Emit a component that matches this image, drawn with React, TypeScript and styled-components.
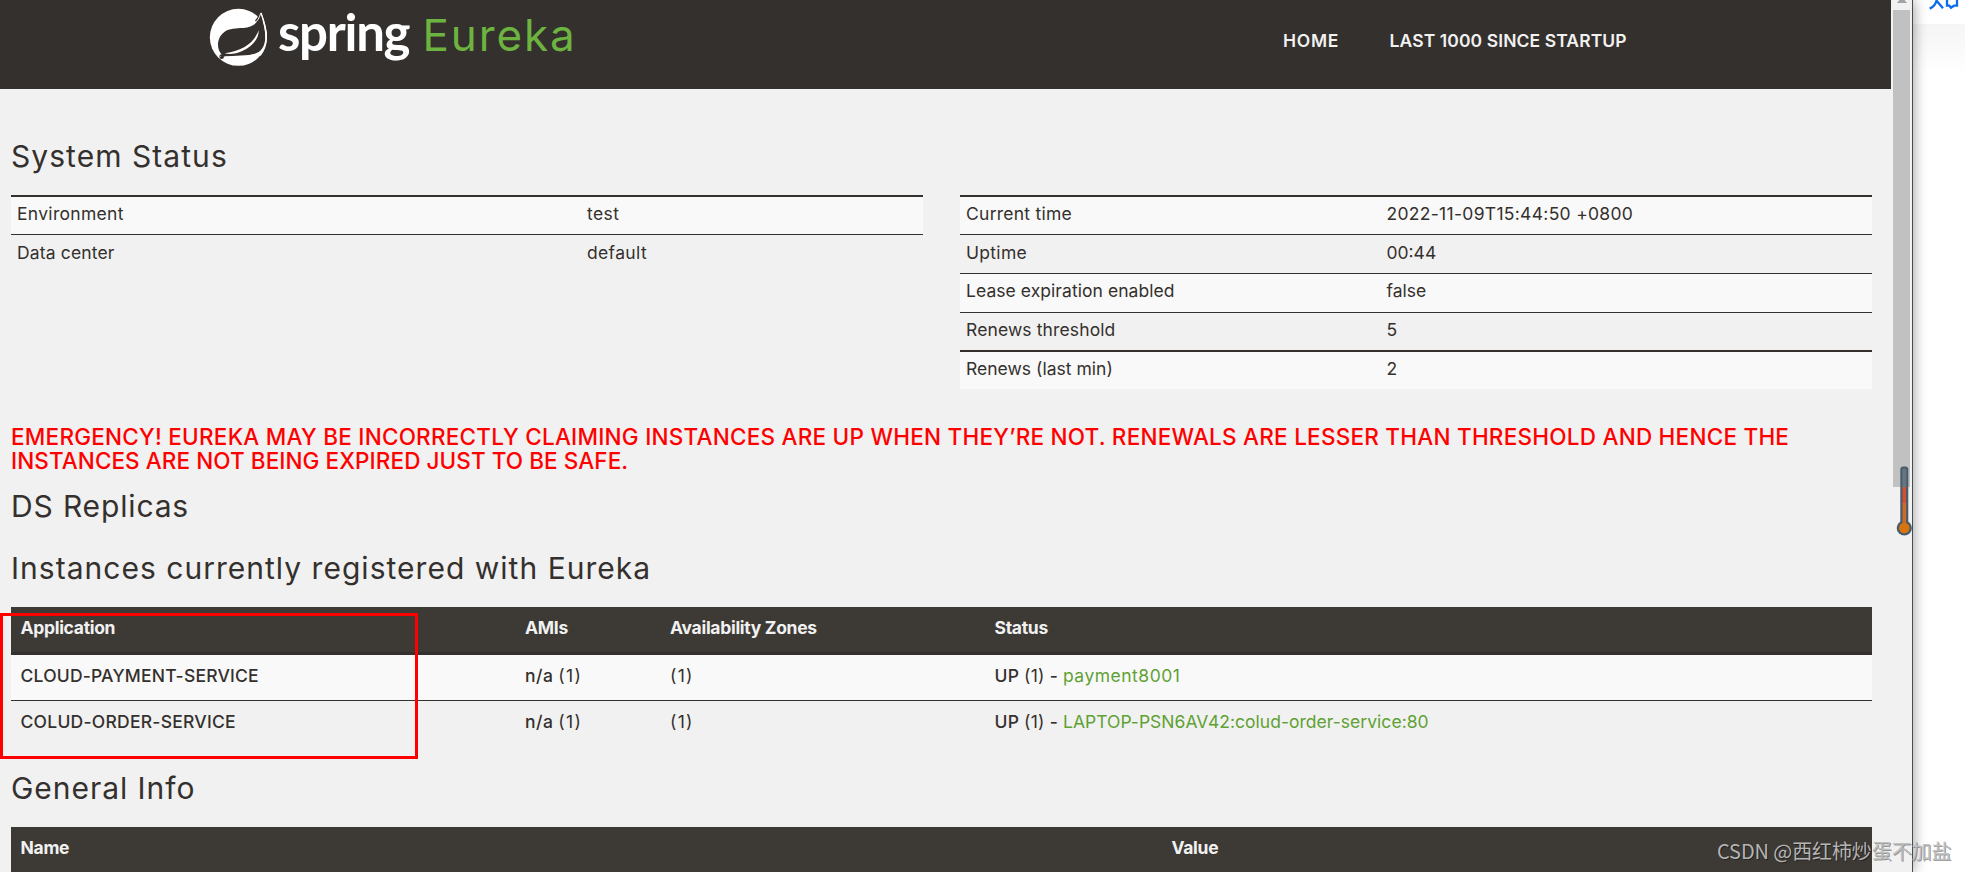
import React from 'react';
import styled, { createGlobalStyle } from 'styled-components';

const GlobalStyle = createGlobalStyle`
  * { box-sizing: border-box; }
  body {
    margin: 0;
    overflow: hidden;
    background: #fff;
    color: #34302d;
    font: 400 17.5px/25px Inter, "Liberation Sans", sans-serif;
  }
`;

const Desktop = styled.div`
  position: relative;
  display: flex;
  height: 872px;
  overflow: hidden;
`;

const BrowserWindow = styled.div`
  position: relative;
  z-index: 1;
  display: flex;
  width: 1913px;
  flex: none;
  background: #f1f1f1;
  border-right: 1px solid #474d4d;
  box-shadow: 0 0 13px rgba(0, 0, 0, 0.42);
`;

const Page = styled.div`
  width: 1891px;
  flex: none;
  overflow: hidden;
`;

const Header = styled.header`
  display: flex;
  align-items: flex-start;
  height: 89px;
  padding-left: 200px;
  background: #34302d;
`;

const LeafLogo = styled.svg`
  width: 80px;
  height: 72px;
  flex: none;
`;

const Brand = styled.div`
  display: flex;
  align-items: baseline;
  width: 1003px;
  line-height: 60px;
  padding-top: 2px;
`;

const BrandSpring = styled.span`
  width: 144.5px;
  margin-left: -2px;
  color: #fff;
  font: 700 51px/60px Lato, sans-serif;
  letter-spacing: -1.3px;
`;

const BrandProduct = styled.span`
  color: #6db33f;
  font-size: 44px;
  letter-spacing: 1.9px;
`;

const Nav = styled.nav`
  display: flex;
  padding-top: 28px;
`;

const NavLink = styled.a<{ $width: number; $tracking: number }>`
  width: ${p => p.$width}px;
  color: #f1f1f1;
  font-weight: 600;
  letter-spacing: ${p => p.$tracking}px;
  white-space: nowrap;
`;

const Main = styled.main`
  padding: 49px 19px 0 11px;
`;

const Heading = styled.h1<{ $tracking?: number; $gap?: number }>`
  margin: 0 0 ${p => p.$gap ?? 21}px;
  font-size: 30px;
  font-weight: 400;
  line-height: 36px;
  letter-spacing: ${p => p.$tracking ?? 0.95}px;
`;

const StatusColumns = styled.section`
  display: grid;
  grid-template-columns: 912px 912px;
  column-gap: 37px;
  align-items: start;
  height: 230px;
`;

const StatusTable = styled.div`
  display: flex;
  flex-direction: column;
`;

const StatusRow = styled.div<{ $label: number; $thick?: boolean; $height?: number; $raised?: boolean }>`
  display: grid;
  grid-template-columns: ${p => p.$label}px 1fr;
  height: ${p => p.$height ?? 39}px;
  padding: ${p => (p.$thick || p.$raised ? 4 : 5)}px 5px 0 6px;
  border-top: ${p => (p.$thick ? 2 : 1)}px solid #34302d;

  &:nth-child(odd) { background: #f9f9f9; }
`;

const Text = styled.span<{ $tracking?: number }>`
  letter-spacing: ${p => p.$tracking ?? 0}px;
  white-space: nowrap;
`;

const Emergency = styled.h4`
  margin: 0 0 15px;
  color: #f00;
  font-size: 22.5px;
  font-weight: 500;
  line-height: 24px;
  white-space: nowrap;
`;

const DataTable = styled.div<{ $columns: string }>`
  display: grid;
  grid-template-columns: ${p => p.$columns};
  margin-bottom: 24px;
`;

const HeadCell = styled.div<{ $tracking?: number }>`
  height: 48px;
  padding: 8px 9.5px 0;
  background: #3d3935;
  border-bottom: 3px solid #34302d;
  color: #f1f1f1;
  font-weight: 700;
  letter-spacing: ${p => p.$tracking ?? -0.3}px;
`;

const Cell = styled.div<{ $first?: boolean }>`
  height: ${p => (p.$first ? 45 : 46)}px;
  padding: 8px 9.5px 0;
  background: ${p => (p.$first ? '#f9f9f9' : 'transparent')};
  border-top: ${p => (p.$first ? '0' : '1px solid #34302d')};
  white-space: nowrap;
`;

const Strong = styled.b<{ $tracking?: number }>`
  font-weight: 500;
  letter-spacing: ${p => p.$tracking ?? 0.2}px;
`;

const Count = styled.span<{ $tracking?: number }>`
  letter-spacing: ${p => p.$tracking ?? 1.3}px;
`;

const InstanceLink = styled.a<{ $tracking?: number }>`
  color: #5fa134;
  letter-spacing: ${p => p.$tracking ?? 0}px;
`;

const Scrollbar = styled.div`
  display: flex;
  flex-direction: column;
  align-items: center;
  width: 21px;
`;

const ScrollArrow = styled.svg`
  width: 12px;
  height: 10px;
`;

const ScrollThumb = styled.div`
  width: 17px;
  height: 477px;
  background: #c1c1c1;
`;

const Backdrop = styled.div`
  flex: 1;
  padding-top: 24px;
`;

const BackdropShade = styled.div`
  height: 50px;
  background: linear-gradient(#f5f5f5, #fff);
`;

const BackdropLogo = styled.svg`
  position: absolute;
  left: 1925px;
  top: 0;
  width: 40px;
  height: 12px;
`;

const Thermometer = styled.svg`
  position: absolute;
  z-index: 2;
  left: 1894px;
  top: 464px;
  width: 20px;
  height: 74px;
`;

const Marker = styled.div`
  position: absolute;
  z-index: 2;
  left: 0;
  top: 613px;
  width: 418px;
  height: 146px;
  border: 3px solid #f00;
`;

const Watermark = styled.div`
  position: absolute;
  z-index: 3;
  left: 1717px;
  top: 837px;
  color: rgba(190, 190, 190, 0.95);
  font: 400 20px/28px "Noto Sans CJK SC", sans-serif;
  letter-spacing: -0.1px;
  text-shadow: 1px 1px 0 rgba(0, 0, 0, 0.4);
  white-space: nowrap;
`;

type Status = {
  label: string;
  value: string;
  lt?: number;
  vt?: number;
  thick?: boolean;
  raised?: boolean;
  height?: number;
};

const environment: Status[] = [
  { label: 'Environment', value: 'test', lt: 0.3, vt: 0.4, thick: true },
  { label: 'Data center', value: 'default', lt: 0.15, vt: 0.35 },
];

const runtime: Status[] = [
  { label: 'Current time', value: '2022-11-09T15:44:50 +0800', lt: 0.25, vt: 0.3, thick: true },
  { label: 'Uptime', value: '00:44', lt: 0.3, vt: 0 },
  { label: 'Lease expiration enabled', value: 'false', lt: 0.06, vt: 0, raised: true },
  { label: 'Renews threshold', value: '5', lt: 0.12, height: 38, raised: true },
  { label: 'Renews (last min)', value: '2', lt: 0.02, thick: true },
];

const instances = [
  { name: 'CLOUD-PAYMENT-SERVICE', tracking: 0.2, link: 'payment8001', linkTracking: 0.5 },
  { name: 'COLUD-ORDER-SERVICE', tracking: 0.25, link: 'LAPTOP-PSN6AV42:colud-order-service:80', linkTracking: 0.03 },
];

function StatusList({ rows, labelWidth }: { rows: Status[]; labelWidth: number }) {
  return (
    <StatusTable>
      {rows.map(r => (
        <StatusRow key={r.label} $label={labelWidth} $thick={r.thick} $height={r.height} $raised={r.raised}>
          <Text $tracking={r.lt}>{r.label}</Text>
          <Text $tracking={r.vt}>{r.value}</Text>
        </StatusRow>
      ))}
    </StatusTable>
  );
}

export default function App() {
  return (
    <Desktop>
      <GlobalStyle />
      <BrowserWindow>
        <Page>
          <Header>
            <LeafLogo viewBox="0 0 240 216">
              <circle cx="115" cy="112" r="85.5" fill="#fff" />
              <path d="M183 37C194 66 202 90 201 116C200 137 192 156 180 169L150 120Z" fill="#fff" />
              <path d="M182 46C172 72 155 82 130 84C108 85 88 85 74 95C59 106 54 121 54 134C54 146 58 155 64 162L72 170C105 166 145 169 170 160C190 150 196 130 196 108C195 84 189 64 182 46Z" fill="#34302d" />
              <path d="M176 91C164 124 134 151 74 160C90 165 110 161 127 153C158 138 177 115 176 91Z" fill="#fff" />
              <path d="M70 169C110 172 155 170 178 155L168 172L115 184Z" fill="#fff" />
              <path d="M183 37L165 62L185 80L188 60Z" fill="#34302d" />
              <path d="M183 39C193 66 200 92 198 116" fill="none" stroke="#fff" strokeWidth="4" />
              <path d="M182 40C178 54 172 63 164 70" fill="none" stroke="#fff" strokeWidth="3" />
              <circle cx="65" cy="170" r="7" fill="#34302d" />
              <circle cx="61" cy="169" r="2" fill="#aaa" />
            </LeafLogo>
            <Brand>
              <BrandSpring>spring</BrandSpring>
              <BrandProduct>Eureka</BrandProduct>
            </Brand>
            <Nav>
              <NavLink $width={106.5} $tracking={0.7}>HOME</NavLink>
              <NavLink $width={250} $tracking={0.1}>LAST 1000 SINCE STARTUP</NavLink>
            </Nav>
          </Header>
          <Main>
            <Heading $tracking={1.05}>System Status</Heading>
            <StatusColumns>
              <StatusList rows={environment} labelWidth={570} />
              <StatusList rows={runtime} labelWidth={420.5} />
            </StatusColumns>
            <Emergency>
              <Text $tracking={0.24}>
                EMERGENCY! EUREKA MAY BE INCORRECTLY CLAIMING INSTANCES ARE UP WHEN THEY’RE NOT. RENEWALS ARE LESSER THAN THRESHOLD AND HENCE THE
              </Text>
              <br />
              <Text $tracking={0.08}>INSTANCES ARE NOT BEING EXPIRED JUST TO BE SAFE.</Text>
            </Emergency>
            <Heading $gap={26} $tracking={0.85}>DS Replicas</Heading>
            <Heading $tracking={1.02}>Instances currently registered with Eureka</Heading>
            <DataTable $columns="504.5px 145px 324.5px 1fr">
              <HeadCell>Application</HeadCell>
              <HeadCell>AMIs</HeadCell>
              <HeadCell>Availability Zones</HeadCell>
              <HeadCell>Status</HeadCell>
              {instances.map((it, i) => (
                <React.Fragment key={it.name}>
                  <Cell $first={i === 0}><Strong $tracking={it.tracking}>{it.name}</Strong></Cell>
                  <Cell $first={i === 0}><Strong $tracking={0.5}>n/a</Strong> <Count>(1)</Count></Cell>
                  <Cell $first={i === 0}><Count>(1)</Count></Cell>
                  <Cell $first={i === 0}>
                    <Strong>UP</Strong> <Count $tracking={0.3}>(1)</Count> <Strong>-</Strong>{' '}
                    <InstanceLink $tracking={it.linkTracking}>{it.link}</InstanceLink>
                  </Cell>
                </React.Fragment>
              ))}
            </DataTable>
            <Heading>General Info</Heading>
            <DataTable $columns="1151px 1fr">
              <HeadCell>Name</HeadCell>
              <HeadCell>Value</HeadCell>
            </DataTable>
          </Main>
        </Page>
        <Scrollbar>
          <ScrollArrow viewBox="0 0 12 10"><path d="M1 3L5-2H7L11 3Z" fill="#a3a3a3" /></ScrollArrow>
          <ScrollThumb />
        </Scrollbar>
      </BrowserWindow>
      <Backdrop><BackdropShade /></Backdrop>
      <BackdropLogo viewBox="0 0 120 36">
        <path d="M36-4C34 8 28 20 14 26M36 4L54 25M66-4V17H73L78 23L87 17H96V-4" fill="none" stroke="#0a6cf0" strokeWidth="7" />
      </BackdropLogo>
      <Thermometer viewBox="0 0 20 74">
        <circle cx="10.3" cy="64" r="7.6" fill="#475c6b" />
        <rect x="6.3" y="2.5" width="8" height="60" rx="3" fill="#475c6b" />
        <rect x="8.3" y="4.5" width="4" height="20" rx="1" fill="#667580" />
        <rect x="8.5" y="23" width="3.6" height="17" fill="#d05232" />
        <rect x="8.5" y="39" width="3.6" height="22" fill="#cf6a25" />
        <circle cx="10.3" cy="64" r="5.3" fill="#d9730d" />
      </Thermometer>
      <Marker />
      <Watermark>CSDN @西红柿炒蛋不加盐</Watermark>
    </Desktop>
  );
}
